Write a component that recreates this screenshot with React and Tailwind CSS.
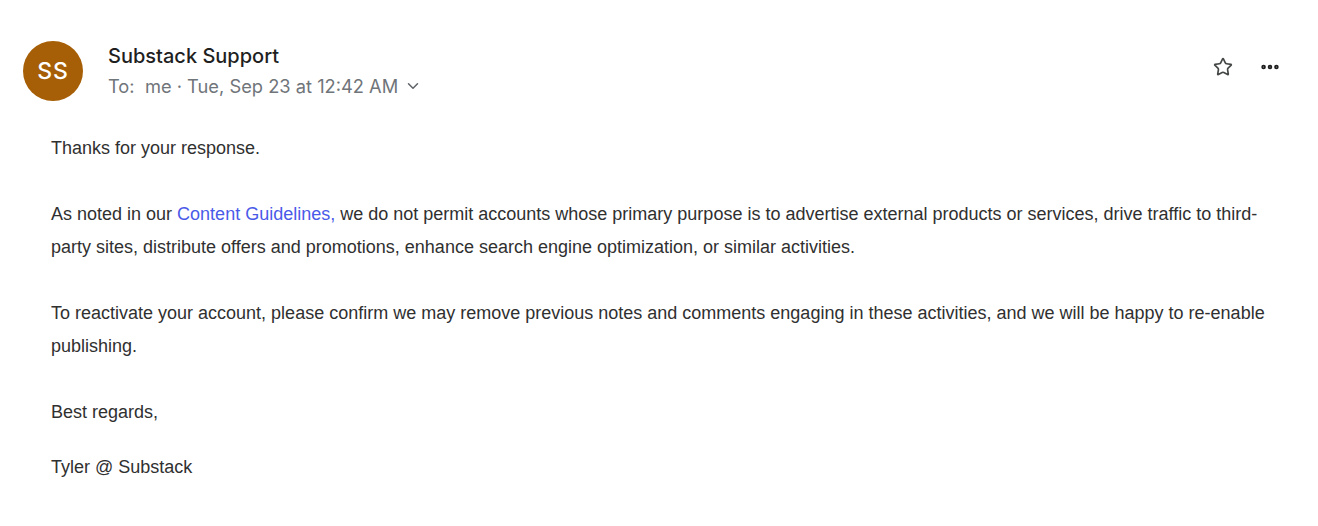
import React from 'react';
import { Star, MoreHorizontal, ChevronDown } from 'lucide-react';

const App = () => {
  return (
    <div className="w-[1318px] h-[526px] bg-white overflow-hidden">
      <div className="flex items-start pt-[41px] pl-[23px] pr-[37px]">
        <div className="w-[60px] h-[60px] rounded-full bg-[#a65f06] flex items-center justify-center shrink-0">
          <span className="text-white text-[23px] font-medium tracking-[1px]" style={{ fontFamily: 'Inter, sans-serif' }}>SS</span>
        </div>
        <div className="ml-[25px] flex-1" style={{ fontFamily: 'Inter, sans-serif' }}>
          <div className="text-[20px] font-medium text-[#1f1f1f] leading-[26px] mt-[2px]">Substack Support</div>
          <div className="flex items-center text-[18.3px] text-[#70757a] leading-[26px] mt-[4px]">
            <span>To:&nbsp; me · Tue, Sep 23 at 12:42 AM</span>
            <ChevronDown className="w-[18px] h-[18px] ml-[6px] text-[#5f6368]" strokeWidth={2} />
          </div>
        </div>
        <div className="flex items-center gap-[26px] mt-[15px]">
          <Star className="w-[20px] h-[20px] text-[#444746]" strokeWidth={2} />
          <MoreHorizontal className="w-[22px] h-[22px] text-[#1f1f1f]" strokeWidth={3} />
        </div>
      </div>

      <div className="pl-[51px] pr-[48px] mt-[31px] text-[18px] leading-[33px] text-[#303030]" style={{ fontFamily: '"Liberation Sans", Arial, sans-serif' }}>
        <p>Thanks for your response.</p>
        <p className="mt-[33px]">
          As noted in our <span className="text-[#4a5ae8]">Content Guidelines,</span> we do not permit accounts whose primary purpose is to advertise external products or services, drive traffic to third-party sites, distribute offers and promotions, enhance search engine optimization, or similar activities.
        </p>
        <p className="mt-[33px]">
          To reactivate your account, please confirm we may remove previous notes and comments engaging in these activities, and we will be happy to re-enable publishing.
        </p>
        <p className="mt-[33px]">Best regards,</p>
        <p className="mt-[22px]">Tyler @ Substack</p>
      </div>
    </div>
  );
};

export default App;
